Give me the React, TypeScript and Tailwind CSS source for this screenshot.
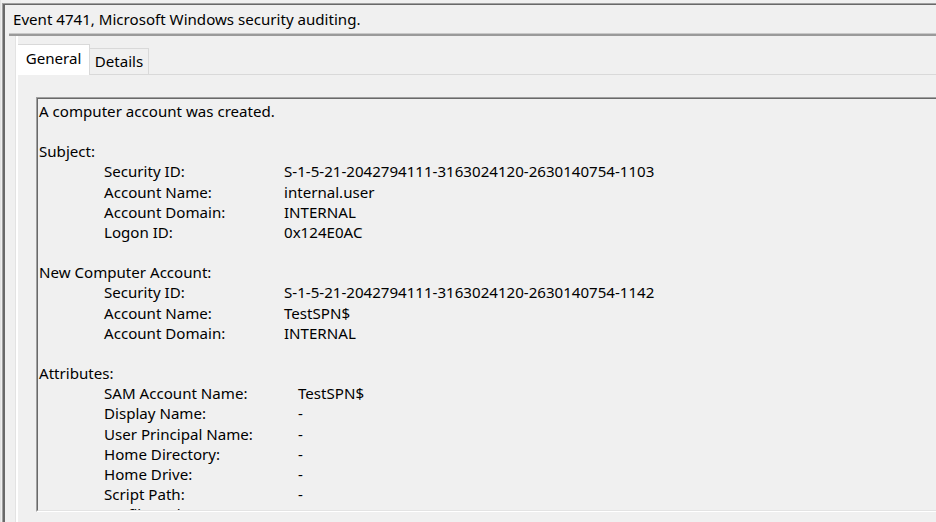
import React from "react";

type Row = { label: string; value: string };

function Section({ title, rows, valueX }: { title: string; rows: Row[]; valueX: string }) {
  return (
    <div>
      <div>{title}</div>
      {rows.map((r) => (
        <div key={r.label} className="flex pl-[65px]">
          <div className={valueX}>{r.label}</div>
          <div>{r.value}</div>
        </div>
      ))}
    </div>
  );
}

export default function App() {
  const subject: Row[] = [
    { label: "Security ID:", value: "S-1-5-21-2042794111-3163024120-2630140754-1103" },
    { label: "Account Name:", value: "internal.user" },
    { label: "Account Domain:", value: "INTERNAL" },
    { label: "Logon ID:", value: "0x124E0AC" },
  ];
  const newAcc: Row[] = [
    { label: "Security ID:", value: "S-1-5-21-2042794111-3163024120-2630140754-1142" },
    { label: "Account Name:", value: "TestSPN$" },
    { label: "Account Domain:", value: "INTERNAL" },
  ];
  const attrs: Row[] = [
    { label: "SAM Account Name:", value: "TestSPN$" },
    { label: "Display Name:", value: "-" },
    { label: "User Principal Name:", value: "-" },
    { label: "Home Directory:", value: "-" },
    { label: "Home Drive:", value: "-" },
    { label: "Script Path:", value: "-" },
    { label: "Profile Path:", value: "-" },
  ];
  return (
    <div className="w-[936px] h-[522px] overflow-hidden bg-[#f0f0f0] text-black font-['Noto_Sans',sans-serif] text-[15.1px]">
      <div className="h-full pt-[3px] pl-[1px] border-l border-[#e3e3e3]">
        <div className="h-full border-t border-l border-[#a0a0a0]">
          <div className="h-full border-t border-l-2 border-[#696969] flex flex-col">
            {/* Title */}
            <div className="h-[28px] pl-[8px] pt-[1px] flex items-center leading-none">
              Event 4741, Microsoft Windows security auditing.
            </div>
            <div className="ml-[4px] h-[3px] border-t border-[#c8c8c8] bg-[#9a9a9a] border-b-0" />
            {/* Body */}
            <div className="flex-1 ml-[10px] border-l border-[#e3e3e3] flex flex-col min-h-0">
              <div className="flex-1 border-l-2 border-white pt-[8px] flex flex-col min-h-0">
                {/* Tabs */}
                <div className="flex items-end h-[31px] shrink-0">
                  <div className="w-[72px] h-[31px] bg-white border-t border-r border-[#d9d9d9] flex items-center justify-center pb-[3px] relative z-10">
                    General
                  </div>
                  <div className="w-[59px] h-[27px] bg-[#f0f0f0] border-t border-r border-b border-[#d9d9d9] flex items-center justify-center pb-[1px]">
                    Details
                  </div>
                  <div className="flex-1 h-[1px] bg-[#d9d9d9]" />
                </div>
                {/* Panel */}
                <div className="flex-1 bg-[#f0f0f0] pl-[18px] pt-[22px] min-h-0">
                  <div className="h-[415px] border-t border-l border-[#a0a0a0] border-b border-b-white">
                    <div className="h-full border-t border-l border-[#696969] border-b border-b-[#e3e3e3] overflow-hidden pl-[1px] pt-[2px] leading-[20.16px]">
                      <div>A computer account was created.</div>
                      <div>&nbsp;</div>
                      <Section title="Subject:" rows={subject} valueX="w-[180px]" />
                      <div>&nbsp;</div>
                      <Section title="New Computer Account:" rows={newAcc} valueX="w-[180px]" />
                      <div>&nbsp;</div>
                      <Section title="Attributes:" rows={attrs} valueX="w-[194px]" />
                    </div>
                  </div>
                </div>
              </div>
            </div>
          </div>
        </div>
      </div>
    </div>
  );
}
